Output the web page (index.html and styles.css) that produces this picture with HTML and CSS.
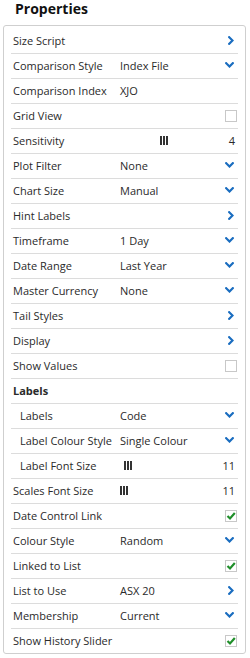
FILE: index.html
```html
<!DOCTYPE html>
<html>
<head>
<meta charset="utf-8">
<link rel="stylesheet" href="styles.css">
</head>
<body>
<h1 class="title">Properties</h1>
<div class="panel">
  <div class="row"><span class="lbl">Size Script</span><span class="val"></span><svg class="ico r" width="6" height="9" viewBox="0 0 6 9"><path d="M1.2 1.2 L4.5 4.5 L1.2 7.8"/></svg></div>
  <div class="row"><span class="lbl">Comparison Style</span><span class="val">Index File</span><svg class="ico d" width="9" height="6" viewBox="0 0 9 6"><path d="M1.2 1.2 L4.5 4.5 L7.8 1.2"/></svg></div>
  <div class="row"><span class="lbl">Comparison Index</span><span class="val">XJO</span><span></span></div>
  <div class="row"><span class="lbl">Grid View</span><span class="val"></span><span class="cb"></span></div>
  <div class="row"><span class="lbl">Sensitivity</span><span class="val"><svg class="thumb" style="margin-left:40px" width="8" height="9" viewBox="0 0 8 9"><rect x="0" y="0" width="2" height="9"/><rect x="3" y="0" width="2" height="9"/><rect x="6" y="0" width="2" height="9"/></svg></span><span class="num">4</span></div>
  <div class="row"><span class="lbl">Plot Filter</span><span class="val">None</span><svg class="ico d" width="9" height="6" viewBox="0 0 9 6"><path d="M1.2 1.2 L4.5 4.5 L7.8 1.2"/></svg></div>
  <div class="row"><span class="lbl">Chart Size</span><span class="val">Manual</span><svg class="ico d" width="9" height="6" viewBox="0 0 9 6"><path d="M1.2 1.2 L4.5 4.5 L7.8 1.2"/></svg></div>
  <div class="row"><span class="lbl">Hint Labels</span><span class="val"></span><svg class="ico r" width="6" height="9" viewBox="0 0 6 9"><path d="M1.2 1.2 L4.5 4.5 L1.2 7.8"/></svg></div>
  <div class="row"><span class="lbl">Timeframe</span><span class="val">1 Day</span><svg class="ico d" width="9" height="6" viewBox="0 0 9 6"><path d="M1.2 1.2 L4.5 4.5 L7.8 1.2"/></svg></div>
  <div class="row"><span class="lbl">Date Range</span><span class="val">Last Year</span><svg class="ico d" width="9" height="6" viewBox="0 0 9 6"><path d="M1.2 1.2 L4.5 4.5 L7.8 1.2"/></svg></div>
  <div class="row"><span class="lbl">Master Currency</span><span class="val">None</span><svg class="ico d" width="9" height="6" viewBox="0 0 9 6"><path d="M1.2 1.2 L4.5 4.5 L7.8 1.2"/></svg></div>
  <div class="row"><span class="lbl">Tail Styles</span><span class="val"></span><svg class="ico r" width="6" height="9" viewBox="0 0 6 9"><path d="M1.2 1.2 L4.5 4.5 L1.2 7.8"/></svg></div>
  <div class="row"><span class="lbl">Display</span><span class="val"></span><svg class="ico r" width="6" height="9" viewBox="0 0 6 9"><path d="M1.2 1.2 L4.5 4.5 L1.2 7.8"/></svg></div>
  <div class="row"><span class="lbl">Show Values</span><span class="val"></span><span class="cb"></span></div>
  <div class="row head"><span class="lbl">Labels</span><span class="val"></span><span></span></div>
  <div class="row sub"><span class="lbl">Labels</span><span class="val">Code</span><svg class="ico d" width="9" height="6" viewBox="0 0 9 6"><path d="M1.2 1.2 L4.5 4.5 L7.8 1.2"/></svg></div>
  <div class="row sub"><span class="lbl">Label Colour Style</span><span class="val">Single Colour</span><svg class="ico d" width="9" height="6" viewBox="0 0 9 6"><path d="M1.2 1.2 L4.5 4.5 L7.8 1.2"/></svg></div>
  <div class="row sub"><span class="lbl">Label Font Size</span><span class="val"><svg class="thumb" style="margin-left:4px" width="8" height="9" viewBox="0 0 8 9"><rect x="0" y="0" width="2" height="9"/><rect x="3" y="0" width="2" height="9"/><rect x="6" y="0" width="2" height="9"/></svg></span><span class="num">11</span></div>
  <div class="row"><span class="lbl">Scales Font Size</span><span class="val"><svg class="thumb" style="margin-left:0px" width="8" height="9" viewBox="0 0 8 9"><rect x="0" y="0" width="2" height="9"/><rect x="3" y="0" width="2" height="9"/><rect x="6" y="0" width="2" height="9"/></svg></span><span class="num">11</span></div>
  <div class="row"><span class="lbl">Date Control Link</span><span class="val"></span><span class="cb"><svg width="10" height="10" viewBox="0 0 10 10"><path d="M1.5 5 L4 7.5 L8.8 2"/></svg></span></div>
  <div class="row"><span class="lbl">Colour Style</span><span class="val">Random</span><svg class="ico d" width="9" height="6" viewBox="0 0 9 6"><path d="M1.2 1.2 L4.5 4.5 L7.8 1.2"/></svg></div>
  <div class="row"><span class="lbl">Linked to List</span><span class="val"></span><span class="cb"><svg width="10" height="10" viewBox="0 0 10 10"><path d="M1.5 5 L4 7.5 L8.8 2"/></svg></span></div>
  <div class="row"><span class="lbl">List to Use</span><span class="val">ASX 20</span><svg class="ico r" width="6" height="9" viewBox="0 0 6 9"><path d="M1.2 1.2 L4.5 4.5 L1.2 7.8"/></svg></div>
  <div class="row"><span class="lbl">Membership</span><span class="val">Current</span><svg class="ico d" width="9" height="6" viewBox="0 0 9 6"><path d="M1.2 1.2 L4.5 4.5 L7.8 1.2"/></svg></div>
  <div class="row last"><span class="lbl">Show History Slider</span><span class="val"></span><span class="cb"><svg width="10" height="10" viewBox="0 0 10 10"><path d="M1.5 5 L4 7.5 L8.8 2"/></svg></span></div>
</div>
</body>
</html>
```
FILE: styles.css
```css
html, body {
  margin: 0;
  padding: 0;
  background: #fff;
}
body {
  font-family: "Open Sans", "Liberation Sans", sans-serif;
  font-size: 11px;
  color: #2a2a2a;
  padding-left: 3px;
  width: 243px;
}
.title {
  margin: 0;
  padding: 0 0 0 12px;
  height: 25px;
  line-height: 18px;
  font-size: 14px;
  font-weight: 700;
  color: #111;
}
.panel {
  border: 1px solid #cfcfcf;
  border-radius: 3px;
  padding-top: 3px;
  box-sizing: border-box;
  width: 243px;
}
.row {
  margin: 0 7px;
  height: 25px;
  box-sizing: border-box;
  border-bottom: 1px solid #dcdcdc;
  display: grid;
  grid-template-columns: 107px 1fr auto;
  align-items: center;
  padding: 0 3px 2px 2px;
  white-space: nowrap;
}
.row.last {
  border-bottom: none;
  height: 24px;
}
.row.sub {
  padding-left: 9px;
  grid-template-columns: 100px 1fr auto;
}
.row.head .lbl {
  font-weight: 700;
}
.val {
  display: flex;
  align-items: center;
}
.ico {
  display: block;
  fill: none;
  stroke: #1a6dc0;
  stroke-width: 2.2;
  stroke-linecap: square;
  margin-right: 1px;
}
.thumb {
  display: block;
  fill: #333;
}
.num {
  color: #2a2a2a;
}
.cb {
  width: 12px;
  height: 12px;
  box-sizing: border-box;
  border: 1px solid #c8c8c8;
  background: #fff;
  margin: 1px -2px 0 0;
  display: flex;
  align-items: center;
  justify-content: center;
}
.cb svg {
  display: block;
  fill: none;
  stroke: #1f8f2a;
  stroke-width: 2.2;
}
```
